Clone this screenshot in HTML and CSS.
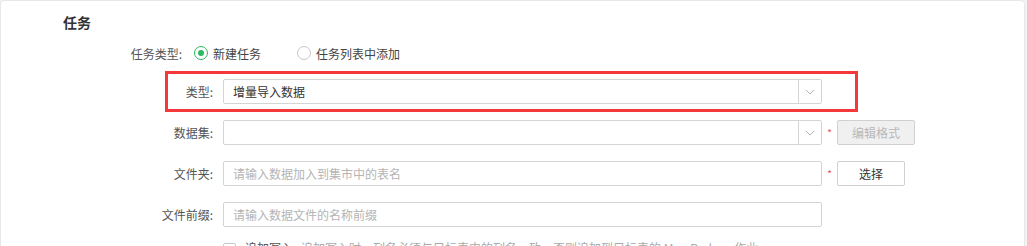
FILE: index.html
```html
<!DOCTYPE html>
<html lang="zh-CN">
<head>
<meta charset="utf-8">
<title>任务</title>
<link rel="stylesheet" href="styles.css">
</head>
<body>
<div class="card">
  <div class="title">任务</div>
  <div class="form">
    <div class="row-radio">
      <span class="rlabel">任务类型:</span>
      <label class="radio checked"><span class="dot"></span>新建任务</label>
      <label class="radio"><span class="dot"></span>任务列表中添加</label>
    </div>
    <div class="row">
      <span class="highlight"></span>
      <span class="label">类型:</span>
      <div class="select">
        <span class="value">增量导入数据</span>
        <span class="arrow"><svg width="10" height="6" viewBox="0 0 10 6"><path d="M1 1 L5 5 L9 1" fill="none" stroke="#b5b5b5" stroke-width="1"/></svg></span>
      </div>
    </div>
    <div class="row">
      <span class="label">数据集:</span>
      <div class="select">
        <span class="value"></span>
        <span class="arrow"><svg width="10" height="6" viewBox="0 0 10 6"><path d="M1 1 L5 5 L9 1" fill="none" stroke="#b5b5b5" stroke-width="1"/></svg></span>
      </div>
      <span class="star">*</span>
      <button class="btn disabled">编辑格式</button>
    </div>
    <div class="row">
      <span class="label">文件夹:</span>
      <div class="input"><span class="ph">请输入数据加入到集市中的表名</span></div>
      <span class="star">*</span>
      <button class="btn choose">选择</button>
    </div>
    <div class="row">
      <span class="label">文件前缀:</span>
      <div class="input"><span class="ph">请输入数据文件的名称前缀</span></div>
    </div>
    <div class="row-check">
      <span class="box"></span>
      <span class="ctext"><b>追加写入</b>追加写入时，列名必须与目标表中的列名一致，否则追加到目标表的 Map Reduce 作业</span>
    </div>
  </div>
</div>
</body>
</html>
```
FILE: styles.css
```css
* { box-sizing: border-box; }
html, body { margin: 0; padding: 0; }
body {
  background: #f2f2f2;
  font-family: "Noto Sans CJK SC", "Noto Sans", sans-serif;
  font-size: 12px;
  color: #333;
  overflow: hidden;
}
.card {
  width: 1025px;
  height: 270px;
  background: #fff;
  border: 1px solid #e8e8e8;
  border-radius: 4px;
  padding: 11px 0 0 62px;
}
.title {
  font-size: 14px;
  font-weight: bold;
  line-height: 20px;
  color: #333;
}
.form {
  margin-top: 9px;
  display: flex;
  flex-direction: column;
  gap: 16px;
}
.row-radio {
  display: flex;
  align-items: center;
  height: 24px;
  margin-bottom: -2px;
}
.rlabel {
  width: 119px;
  text-align: right;
  color: #555;
  margin-right: 12px;
}
.radio {
  display: flex;
  align-items: center;
  gap: 5px;
  color: #444;
  margin-right: 36px;
}
.radio .dot {
  width: 14px;
  height: 14px;
  border: 1px solid #c8c8c8;
  border-radius: 50%;
  display: flex;
  align-items: center;
  justify-content: center;
}
.radio.checked .dot { border-color: #2db862; }
.radio.checked .dot::after {
  content: "";
  width: 6px;
  height: 6px;
  border-radius: 50%;
  background: #2db862;
}
.row {
  position: relative;
  display: flex;
  align-items: center;
  height: 25px;
}
.label {
  width: 150px;
  text-align: right;
  color: #555;
  margin-right: 10px;
}
.select, .input {
  width: 599px;
  height: 25px;
  border: 1px solid #d4d4d4;
  border-radius: 2px;
  display: flex;
  align-items: center;
  background: #fff;
}
.select .value {
  flex: 1;
  padding-left: 9px;
  color: #333;
}
.select .arrow {
  width: 23px;
  height: 100%;
  border-left: 1px solid #d4d4d4;
  display: flex;
  align-items: center;
  justify-content: center;
}
.input .ph {
  padding-left: 9px;
  color: #b4b4b4;
}
.star {
  width: 15px;
  text-align: center;
  color: #f04a4a;
  font-size: 10px;
  line-height: 10px;
}
.btn {
  height: 25px;
  border: 1px solid #d0d0d0;
  border-radius: 2px;
  font-family: inherit;
  font-size: 12px;
  padding: 0;
}
.btn.disabled {
  width: 78px;
  background: #f0f0f0;
  color: #b8b8b8;
}
.btn.choose {
  width: 68px;
  background: #fff;
  color: #333;
}
.highlight {
  position: absolute;
  left: 102px;
  top: -8px;
  width: 693px;
  height: 41px;
  border: 3px solid #f5393b;
  pointer-events: none;
}
.row-check {
  display: flex;
  align-items: flex-start;
  gap: 9px;
  padding-left: 160px;
  margin-top: 0;
  height: 16px;
  line-height: 14px;
}
.row-check .box {
  width: 13px;
  height: 13px;
  border: 1px solid #c8c8c8;
  border-radius: 2px;
}
.ctext { color: #aaa; margin-top: -2px; }
.ctext b { color: #555; font-weight: normal; margin-right: 8px; }
```
